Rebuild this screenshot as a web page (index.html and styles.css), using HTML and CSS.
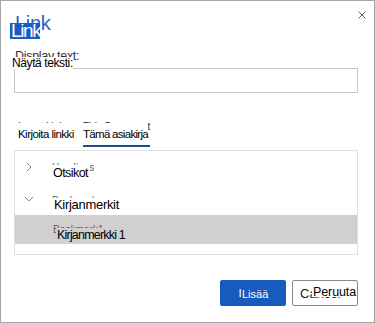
FILE: index.html
```html
<!DOCTYPE html>
<html lang="fi">
<head>
<meta charset="utf-8">
<title>Link</title>
<link rel="stylesheet" href="styles.css">
</head>
<body>
<div class="dialog">
  <div class="header">
    <div class="wrap title-wrap">
      <span class="orig title">Link</span>
      <span class="ov ov-title">Link</span>
    </div>
    <span class="close" aria-label="Close">
      <svg width="8" height="8" viewBox="0 0 8 8"><path d="M0.5 0.5 L7.5 7.5 M7.5 0.5 L0.5 7.5" stroke="#605e5c" stroke-width="1" fill="none"/></svg>
    </span>
  </div>

  <div class="field">
    <div class="wrap label-wrap">
      <span class="orig label">Display text:</span>
      <span class="ov ov-label">Näytä teksti:</span>
    </div>
    <div class="input"></div>
  </div>

  <div class="tabs">
    <div class="wrap tab tab-insert">
      <span class="orig tab-text">Insert Link</span>
      <span class="ov ov-tab ov-tab1">Kirjoita linkki</span>
    </div>
    <div class="wrap tab tab-doc active">
      <span class="orig tab-text">This Document</span>
      <span class="ov ov-tab ov-tab2">Tämä asiakirja</span>
    </div>
  </div>

  <div class="list">
    <div class="row row-head">
      <span class="chev"><svg class="chev-right" width="6" height="10" viewBox="0 0 6 10"><path d="M0.8 0.8 L5 5 L0.8 9.2" stroke="#8a8886" stroke-width="1" fill="none"/></svg></span>
      <div class="wrap item-wrap item1">
        <span class="orig item-text">Headings</span>
        <span class="ov ov-item1">Otsikot</span>
      </div>
    </div>
    <div class="row row-head">
      <span class="chev"><svg class="chev-down" width="10" height="6" viewBox="0 0 10 6"><path d="M0.8 0.8 L5 5 L9.2 0.8" stroke="#8a8886" stroke-width="1" fill="none"/></svg></span>
      <div class="wrap item-wrap item2">
        <span class="orig item-text">Bookmarks</span>
        <span class="ov ov-item2">Kirjanmerkit</span>
      </div>
    </div>
    <div class="row row-sel">
      <div class="wrap item-wrap item3">
        <span class="orig item-text">Bookmark1</span>
        <span class="ov ov-item3">Kirjanmerkki 1</span>
      </div>
    </div>
  </div>

  <div class="footer">
    <div class="btn btn-primary">
      <span class="orig btn-text">Insert</span>
      <span class="ov ov-insert">Lisää</span>
    </div>
    <div class="btn btn-cancel">
      <span class="orig btn-text">Cancel</span>
      <span class="ov ov-cancel">Peruuta</span>
    </div>
  </div>
</div>
</body>
</html>
```

FILE: styles.css
```css
* { box-sizing: border-box; }

html, body {
  margin: 0;
  padding: 0;
  background: #ffffff;
}

body {
  font-family: "Liberation Sans", Arial, sans-serif;
  color: #323130;
}

.dialog {
  width: 375px;
  height: 323px;
  border: 1px solid #a6a6a6;
  background: #ffffff;
  padding: 0 16px 0 13px;
  display: flex;
  flex-direction: column;
}

.wrap {
  position: relative;
}

.orig {
  display: block;
  white-space: nowrap;
}

.ov {
  position: absolute;
  display: block;
  white-space: nowrap;
  color: #000000;
  background: #ffffff;
  overflow: visible;
}

/* Header */
.header {
  height: 47px;
  padding-top: 11px;
  display: flex;
  justify-content: space-between;
  align-items: flex-start;
}

.title-wrap {
  padding-left: 1px;
}

.title {
  font-size: 20px;
  line-height: 22px;
  color: #2b62c0;
  letter-spacing: -0.3px;
}

.ov-title {
  left: -4px;
  top: 11px;
  width: 30px;
  height: 16px;
  background: #1a5bc4;
  color: #ffffff;
  font-size: 19px;
  line-height: 16px;
  padding-left: 1px;
  letter-spacing: -1.4px;
  overflow: hidden;
}

.close {
  display: flex;
  margin-top: -1px;
  margin-right: -8px;
}

/* Field */
.field {
  display: flex;
  flex-direction: column;
}

.label-wrap {
  height: 20px;
  padding-left: 1px;
}

.label {
  font-size: 12.5px;
  line-height: 16px;
  color: #323130;
  letter-spacing: -0.3px;
}

.ov-label {
  left: -3px;
  top: 9px;
  width: 62px;
  height: 12px;
  font-size: 12px;
  line-height: 12px;
  padding-left: 1px;
  letter-spacing: -0.4px;
}

.input {
  height: 25px;
  border: 1px solid #c8c6c4;
  background: #ffffff;
}

/* Tabs */
.tabs {
  display: flex;
  margin-top: 26px;
  padding-left: 4px;
}

.tab {
  height: 28px;
}

.tab-insert {
  width: 65px;
}

.tab-doc {
  width: 67px;
}

.tab.active {
  border-bottom: 2px solid #1c4f91;
}

.tab-text {
  font-size: 10px;
  line-height: 16px;
  color: #323130;
}

.ov-tab {
  left: 0;
  top: 4px;
  height: 18px;
  padding-top: 4px;
  font-size: 11.5px;
  line-height: 14px;
}

.ov-tab1 {
  letter-spacing: -0.55px;
}

.ov-tab2 {
  letter-spacing: -0.7px;
}

/* List */
.list {
  margin-top: 3px;
  border: 1px solid #e1dfdd;
  padding-bottom: 10px;
  display: flex;
  flex-direction: column;
}

.row {
  height: 32px;
  display: flex;
  align-items: flex-start;
}

.row-head {
  padding-left: 6px;
}

.chev {
  width: 16px;
  display: flex;
  justify-content: center;
  margin-right: 15px;
}

.chev-right {
  margin-top: 11px;
}

.chev-down {
  margin-top: 13px;
}

.item-text {
  font-size: 10px;
  line-height: 12px;
  color: #605e5c;
}

.item1 {
  margin-top: 11px;
}

.ov-item1 {
  left: 0;
  top: 3px;
  padding-top: 1px;
  padding-left: 1px;
  padding-right: 2px;
  font-size: 12.5px;
  line-height: 14px;
  letter-spacing: -0.55px;
}

.item2 {
  margin-top: 12px;
}

.ov-item2 {
  left: 0;
  top: 3px;
  padding-left: 2px;
  padding-right: 2px;
  font-size: 13px;
  line-height: 14px;
  letter-spacing: -0.3px;
}

.row-sel {
  height: 29px;
  background: #d2d0ce;
  padding-left: 38px;
}

.item3 {
  margin-top: 9px;
}

.ov-item3 {
  left: 3px;
  top: 4px;
  padding-left: 1px;
  padding-right: 2px;
  background: #d2d0ce;
  font-size: 12.5px;
  line-height: 14px;
  letter-spacing: -0.8px;
}

/* Footer */
.footer {
  margin-top: 25px;
  display: flex;
  justify-content: flex-end;
  gap: 6px;
}

.btn {
  position: relative;
  width: 66px;
  height: 26px;
  border-radius: 2px;
  display: flex;
  justify-content: center;
  align-items: flex-start;
}

.btn-primary {
  background: #185abd;
  border: 1px solid #185abd;
  color: #ffffff;
}

.btn-primary .btn-text {
  font-size: 11.5px;
  line-height: 14px;
  margin-top: 5px;
  color: #ffffff;
}

.ov-insert {
  left: 21px;
  top: 5px;
  height: 16px;
  width: 30px;
  padding-top: 1px;
  background: #185abd;
  color: #ffffff;
  font-size: 11px;
  line-height: 14px;
}

.btn-cancel {
  background: #ffffff;
  border: 1px solid #8a8886;
  justify-content: flex-start;
  padding-left: 7px;
}

.btn-cancel .btn-text {
  font-size: 13px;
  line-height: 16px;
  margin-top: 5px;
  color: #201f1e;
}

.ov-cancel {
  left: 19px;
  top: 2px;
  height: 14px;
  padding-top: 2px;
  padding-left: 1px;
  font-size: 12.5px;
  line-height: 14px;
  letter-spacing: -0.1px;
}
```
